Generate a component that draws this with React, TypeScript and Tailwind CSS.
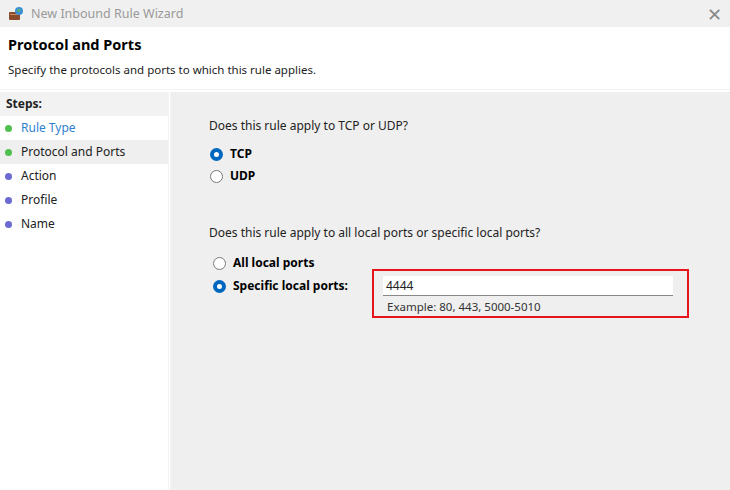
import React from "react";

const Radio = ({ checked }: { checked?: boolean }) => (
  <span
    className={
      checked
        ? "box-border inline-block h-[13px] w-[13px] rounded-full border-[4px] border-[#0067c0] bg-white"
        : "box-border inline-block h-[13px] w-[13px] rounded-full border border-[#7a7a7a] bg-white"
    }
  />
);

const Dot = ({ color }: { color: string }) => (
  <span className={`inline-block h-[7px] w-[7px] rounded-full ${color}`} />
);

const steps = [
  { label: "Rule Type", done: true, link: true },
  { label: "Protocol and Ports", done: true, active: true },
  { label: "Action" },
  { label: "Profile" },
  { label: "Name" },
];

export default function App() {
  return (
    <div className="flex h-[490px] w-[730px] flex-col overflow-hidden bg-white font-[family-name:'Liberation_Sans',Arial,sans-serif] text-[12px] leading-[16px] text-black">
      {/* title bar */}
      <div className="flex h-[27px] items-center bg-[#f0f0f0] pl-[8px] pr-[8px]">
        <svg width="16" height="16" viewBox="0 0 16 16">
          <rect x="1" y="6" width="11" height="8" rx="1" fill="#8a4b2a" />
          <rect x="2" y="8" width="9" height="1" fill="#c98a5a" />
          <circle cx="11" cy="5" r="4" fill="#3b8fd8" />
          <path d="M9 4 Q11 2 13 4 Q12 6 10 6Z" fill="#5cb85c" />
        </svg>
        <span className="ml-[7px] text-[12.5px] text-[#9a9a9a]">New Inbound Rule Wizard</span>
        <span className="ml-auto text-[18px] font-light leading-none text-[#8a8a8a]">✕</span>
      </div>
      {/* header */}
      <div className="h-[62px] bg-white pl-[8px]">
        <div className="pt-[8px] text-[14.5px] font-bold leading-[18px]">Protocol and Ports</div>
        <div className="mt-[9px] text-[11.5px] text-[#222]">Specify the protocols and ports to which this rule applies.</div>
      </div>
      <div className="h-[3px] border-t border-[#f3f3f3] bg-white" />
      <div className="flex flex-1">
        <div className="w-[168px] bg-white">
          <div className="flex h-[24px] items-center bg-[#f2f2f2] pl-[6px] font-bold text-[#222]">Steps:</div>
          {steps.map((s) => (
            <div
              key={s.label}
              className={`flex h-[24px] items-center gap-[9px] pl-[5px] ${s.active ? "bg-[#efefef]" : ""}`}
            >
              <Dot color={s.done ? "bg-[#4fc04f]" : "bg-[#6a6ad0]"} />
              <span className={s.link ? "text-[#2f7fcf]" : "text-[#222]"}>{s.label}</span>
            </div>
          ))}
        </div>
        <div className="w-[3px] border-x border-[#f3f3f3] bg-white" />
        <div className="flex-1 bg-[#efefef] pl-[38px]">
          <div className="mt-[26px] text-[#222]">Does this rule apply to TCP or UDP?</div>
          <div className="mt-[12px] flex items-center gap-[7px] pl-[1px] font-bold">
            <Radio checked /> TCP
          </div>
          <div className="mt-[6px] flex items-center gap-[7px] pl-[1px] font-bold">
            <Radio /> UDP
          </div>
          <div className="mt-[41px] text-[#222]">Does this rule apply to all local ports or specific local ports?</div>
          <div className="mt-[14px] flex items-center gap-[7px] pl-[4px] font-bold">
            <Radio /> All local ports
          </div>
          <div className="flex items-start">
            <div className="mt-[7px] flex w-[163px] items-center gap-[7px] pl-[4px] font-bold">
              <Radio checked /> Specific local ports:
            </div>
            <div className="-mt-[2px] h-[49px] w-[317px] border-2 border-[#e8141c] pl-[9px] pt-[5px]">
              <div className="flex h-[20px] w-[290px] items-center border-b border-[#888] bg-white pl-[3px] text-[#222]">
                4444
              </div>
              <div className="mt-[3px] pl-[4px] text-[11.5px] text-[#333]">Example: 80, 443, 5000-5010</div>
            </div>
          </div>
        </div>
      </div>
    </div>
  );
}
